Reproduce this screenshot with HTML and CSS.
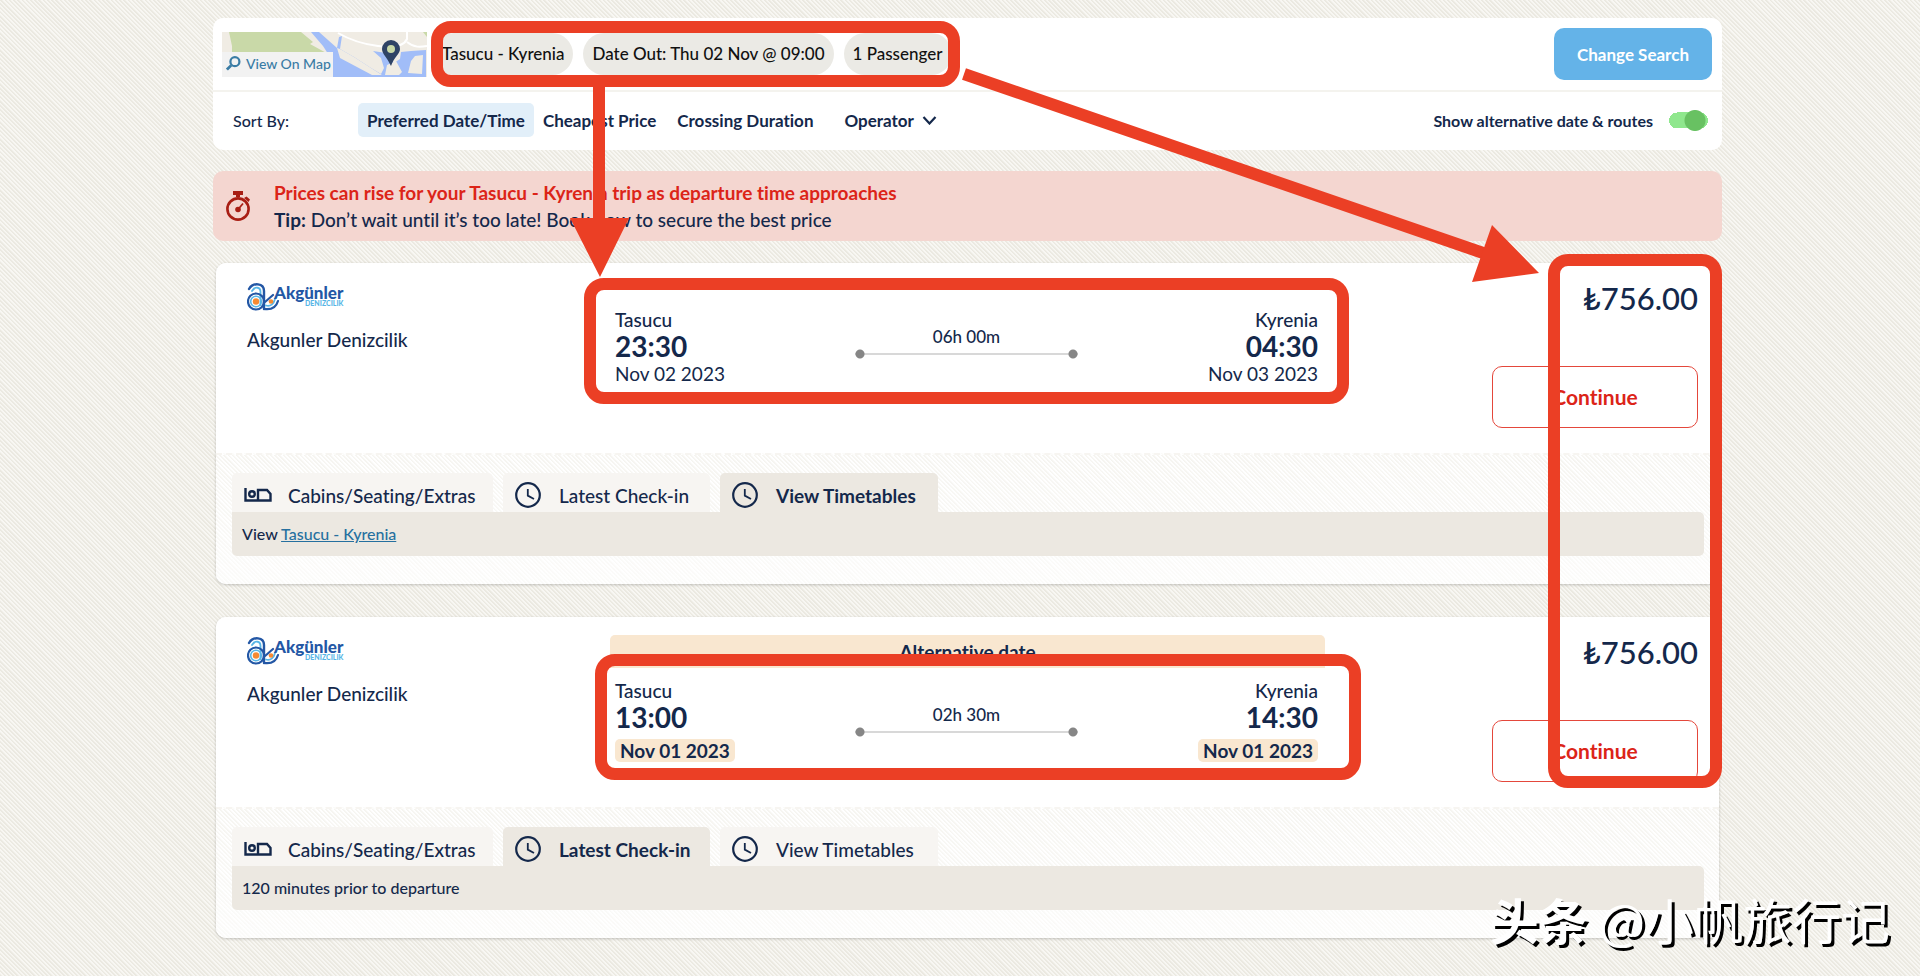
FILE: index.html
```html
<!DOCTYPE html>
<html lang="en">
<head>
    <meta charset="UTF-8">
    <meta name="viewport" content="width=device-width, initial-scale=1.0">
    <title>Tasucu - Kyrenia Ferries</title>
    <link rel="stylesheet" href="styles.css">
</head>
<body>
    <!-- Shared icons -->
    <svg class="sprite" aria-hidden="true">
        <symbol id="icon-bed" viewBox="0 0 28 14">
            <path d="M1.500 0V12.500H26.500V6L23 2H14V12" fill="none" stroke="currentColor" stroke-width="2.400"/>
            <circle cx="8" cy="6" r="2.800" fill="none" stroke="currentColor" stroke-width="2.400"/>
        </symbol>
        <symbol id="icon-clock" viewBox="0 0 26 26">
            <circle cx="13" cy="13" r="11.800" fill="none" stroke="currentColor" stroke-width="2.200"/>
            <path d="M12.800 7V13.600L19 17" fill="none" stroke="currentColor" stroke-width="1.800"/>
        </symbol>
        <symbol id="logo-akgunler" viewBox="0 0 98 28">
            <g fill="none" stroke-linecap="round">
                <path d="M2 6C6 -1 17 0 17 8V26" stroke="#2357a5" stroke-width="2.400"/>
                <path d="M5 8C8 3 13.500 4 13.500 9V22" stroke="#58b6e6" stroke-width="1.800"/>
                <circle cx="9" cy="18.500" r="8" stroke="#2357a5" stroke-width="2.200"/>
                <circle cx="9" cy="18.500" r="5.300" stroke="#58b6e6" stroke-width="1.600"/>
                <path d="M18 19L26 12M17 26C24 27 29 25 31 18" stroke="#2357a5" stroke-width="2.200"/>
                <path d="M19 22.500C24 24 27 20 28 16" stroke="#58b6e6" stroke-width="1.800"/>
            </g>
            <circle cx="9" cy="18.500" r="3.200" fill="#f58a33"/>
            <circle cx="24" cy="18.500" r="2.300" fill="#f58a33"/>
            <text class="logo-name" x="27" y="16">Akgünler</text>
            <text class="logo-sub" x="58" y="23">DENIZCILIK</text>
        </symbol>
    </svg>

    <main class="page">
        <section class="search-panel">
            <div class="search-row">
                <a class="map" href="#map">
                    <svg class="map-art" viewBox="0 0 205 45" preserveAspectRatio="none" aria-hidden="true">
                        <rect width="205" height="45" fill="#f0ece4"/>
                        <path d="M7 0H79L91 10 88 12 108 23 114 30 108 38H10V14Z" fill="#c9d9a8"/>
                        <path d="M89 0H97L115 16 117 5 120 4 118 17 132 25 149 36 159 42 162 36 159 26 151 19 164 21 172 31 178 27 179 20 189 19 204 18V45H110V28L101 14Z" fill="#a1bdf8"/>
                        <path d="M165 33L174 29 180 40 177 43H163ZM189 29L193 24 201 23 200 42 186 41Z" fill="#f0ece4"/>
                        <path d="M118 17L132 25 149 36 160 43 150 43 118 26 115 16Z" fill="#f0ece4"/>
                        <path d="M116 1C128 8 140 12 156 14 172 16 182 14 185 7V0M185 10C192 16 199 15 205 14" fill="none" stroke="#fff" stroke-width="2"/>
                        <path d="M201 0H205V5Z" fill="#c9d9a8"/>
                        <path d="M169 34C165 25 160 22 160 17A9 9 0 0 1 178 17C178 22 172 25 169 34Z" fill="#2f4365"/>
                        <circle cx="169" cy="17" r="4" fill="#c9d9a8"/>
                    </svg>
                    <span class="map-label">
                        <svg class="icon-search" viewBox="0 0 16 16" aria-hidden="true">
                            <circle cx="9.500" cy="6" r="4.800" fill="none" stroke="currentColor" stroke-width="2.400"/>
                            <path d="M5.500 10L1 14.500" stroke="currentColor" stroke-width="3"/>
                        </svg>
                        View On Map
                    </span>
                </a>
                <ul class="pills">
                    <li>Tasucu - Kyrenia</li>
                    <li>Date Out: Thu 02 Nov @ 09:00</li>
                    <li>1 Passenger</li>
                </ul>
                <button class="change-search" type="button">Change Search</button>
            </div>
            <div class="sort-row">
                <span class="sort-label">Sort By:</span>
                <button class="sort-btn active" type="button">Preferred Date/Time</button>
                <button class="sort-btn" type="button">Cheapest Price</button>
                <button class="sort-btn crossing-sort" type="button">Crossing Duration</button>
                <button class="sort-btn operator-sort" type="button">
                    Operator
                    <svg class="chevron" viewBox="0 0 14 9" aria-hidden="true"><path d="M1 1L7 7.500L13 1" fill="none" stroke="currentColor" stroke-width="2.200"/></svg>
                </button>
                <label class="toggle" for="alternatives">
                    Show alternative date &amp; routes
                    <input type="checkbox" id="alternatives" checked>
                </label>
            </div>
        </section>

        <section class="alert">
            <svg class="stopwatch" viewBox="0 0 24 30" aria-hidden="true">
                <path d="M7 0H17V4H14V6H10V4H7ZM18 7L20.500 5.500 24 8.500 22.500 11Z" fill="#a81e14"/>
                <circle cx="12" cy="18" r="10.600" fill="none" stroke="#a81e14" stroke-width="2.600"/>
                <circle cx="12" cy="18.500" r="2.800" fill="#a81e14"/>
                <path d="M12 18.500L17 12.500" stroke="#a81e14" stroke-width="1.800"/>
            </svg>
            <div>
                <p class="alert-title">Prices can rise for your Tasucu - Kyrenia trip as departure time approaches</p>
                <p><strong>Tip:</strong> Don’t wait until it’s too late! Book now to secure the best price</p>
            </div>
        </section>

        <article class="card">
            <div class="card-main">
                <div class="operator">
                    <svg class="logo" viewBox="0 0 98 28" role="img" aria-label="Akgünler Denizcilik"><use href="#logo-akgunler"/></svg>
                    <p>Akgunler Denizcilik</p>
                </div>
                <div class="trip">
                    <div class="itinerary">
                        <div class="stop">
                            <span class="city">Tasucu</span>
                            <span class="time">23:30</span>
                            <span class="date">Nov 02 2023</span>
                        </div>
                        <div class="duration"><span>06h 00m</span></div>
                        <div class="stop arrive">
                            <span class="city">Kyrenia</span>
                            <span class="time">04:30</span>
                            <span class="date">Nov 03 2023</span>
                        </div>
                    </div>
                </div>
                <div class="booking">
                    <span class="price">₺756.00</span>
                    <button class="continue" type="button">Continue</button>
                </div>
            </div>
            <div class="card-footer">
                <div class="tabs">
                    <button class="tab tab-cabins" type="button"><svg class="icon-bed" aria-hidden="true"><use href="#icon-bed"/></svg>Cabins/Seating/Extras</button>
                    <button class="tab tab-checkin" type="button"><svg class="icon-clock" aria-hidden="true"><use href="#icon-clock"/></svg>Latest Check-in</button>
                    <button class="tab tab-times active" type="button"><svg class="icon-clock" aria-hidden="true"><use href="#icon-clock"/></svg>View Timetables</button>
                </div>
                <div class="tab-panel">View <a href="#timetable">Tasucu - Kyrenia</a></div>
            </div>
        </article>

        <article class="card">
            <div class="card-main">
                <div class="operator">
                    <svg class="logo" viewBox="0 0 98 28" role="img" aria-label="Akgünler Denizcilik"><use href="#logo-akgunler"/></svg>
                    <p>Akgunler Denizcilik</p>
                </div>
                <div class="trip alternative">
                    <p class="banner">Alternative date</p>
                    <div class="itinerary">
                        <div class="stop">
                            <span class="city">Tasucu</span>
                            <span class="time">13:00</span>
                            <span class="date">Nov 01 2023</span>
                        </div>
                        <div class="duration"><span>02h 30m</span></div>
                        <div class="stop arrive">
                            <span class="city">Kyrenia</span>
                            <span class="time">14:30</span>
                            <span class="date">Nov 01 2023</span>
                        </div>
                    </div>
                </div>
                <div class="booking">
                    <span class="price">₺756.00</span>
                    <button class="continue" type="button">Continue</button>
                </div>
            </div>
            <div class="card-footer">
                <div class="tabs">
                    <button class="tab tab-cabins" type="button"><svg class="icon-bed" aria-hidden="true"><use href="#icon-bed"/></svg>Cabins/Seating/Extras</button>
                    <button class="tab tab-checkin active" type="button"><svg class="icon-clock" aria-hidden="true"><use href="#icon-clock"/></svg>Latest Check-in</button>
                    <button class="tab tab-times" type="button"><svg class="icon-clock" aria-hidden="true"><use href="#icon-clock"/></svg>View Timetables</button>
                </div>
                <div class="tab-panel">120 minutes prior to departure</div>
            </div>
        </article>
    </main>

    <!-- Hand-drawn frames and arrows over the results -->
    <svg class="marks" viewBox="0 0 1920 976" aria-hidden="true">
        <g fill="none" stroke="#eb3f25" stroke-width="12">
            <rect x="437" y="27" width="517" height="54" rx="14"/>
            <rect x="590" y="284" width="753" height="114" rx="14"/>
            <rect x="601" y="660" width="754" height="114" rx="14"/>
            <rect x="1554" y="260" width="162" height="522" rx="14"/>
            <path d="M599 85V222M964 74L1486 254"/>
        </g>
        <path d="M570 218H629L600 277ZM1492 225L1539 273L1472 282Z" fill="#eb3f25"/>
    </svg>
    <p class="watermark" lang="zh"><b>头条</b> @小帆旅行记</p>
</body>
</html>
```
FILE: styles.css
```css
* {
    box-sizing: border-box;
}
body {
    margin: 0;
    position: relative;
    font-family: Lato, "Liberation Sans", sans-serif;
    font-size: 19px;
    font-weight: 500;
    font-variant-ligatures: none;
    color: #14284b;
    background: #f6f5f0 repeating-linear-gradient(45deg, #ebe9e1 0 1px, #f8f7f3 2px 3px);
}
p, ul {
    margin: 0;
    padding: 0;
}
button {
    font: inherit;
    font-variant-ligatures: none;
    color: inherit;
    border: none;
    background: none;
    padding: 0;
    cursor: pointer;
    white-space: nowrap;
}
.sprite {
    display: none;
}
.page {
    padding: 18px 198px 38px 213px;
}

/* Search panel */
.search-panel {
    background: #fff;
    border-radius: 10px;
}
.search-row {
    display: flex;
    align-items: center;
    height: 74px;
    padding: 0 10px 0 9px;
    border-bottom: 2px solid #f4f3ee;
}
.map {
    display: grid;
    width: 205px;
    height: 45px;
    text-decoration: none;
}
.map-art, .map-label {
    grid-area: 1 / 1;
}
.map-art {
    width: 205px;
    height: 45px;
}
.map-label {
    display: flex;
    align-items: center;
    gap: 5px;
    justify-self: start;
    align-self: end;
    width: 111px;
    height: 25px;
    padding: 0 0 2px 4px;
    background: #f2f2f2;
    color: #3a7ca5;
    font-size: 14px;
    font-weight: 500;
    white-space: nowrap;
}
.icon-search {
    width: 15px;
    height: 15px;
}
.pills {
    display: flex;
    gap: 10px;
    margin-left: 6px;
    list-style: none;
    color: #111;
    font-size: 17px;
}
.pills li {
    padding: 0 9px;
    line-height: 42px;
    border-radius: 21px;
    background: #ebeae5;
}
.change-search {
    margin-left: auto;
    width: 158px;
    height: 52px;
    border-radius: 10px;
    background: #64b3e8;
    color: #fff;
    font-size: 17px;
    font-weight: 700;
}
.sort-row {
    display: flex;
    align-items: center;
    height: 58px;
    padding: 0 14px 2px 20px;
    font-size: 16px;
}
.sort-label {
    width: 125px;
}
.sort-btn {
    height: 34px;
    padding: 0 9px;
    border-radius: 5px;
    font-size: 17px;
    font-weight: 700;
}
.sort-btn.active {
    background: #e2eff9;
}
.crossing-sort {
    margin-left: 3px;
}
.operator-sort {
    display: flex;
    align-items: center;
    gap: 8px;
    margin-left: 13px;
}
.chevron {
    width: 15px;
    height: 9px;
}
.toggle {
    display: flex;
    align-items: center;
    gap: 16px;
    margin-left: auto;
    font-weight: 700;
}
.toggle input {
    appearance: none;
    width: 39px;
    height: 21px;
    margin: 0;
    background:
        radial-gradient(circle at 26px 50%, #68c162 10px, transparent 11px),
        radial-gradient(circle at 8px 50%, #8fe78d 8px, transparent 8px),
        radial-gradient(circle at 31px 50%, #8fe78d 8px, transparent 8px),
        linear-gradient(#8fe78d, #8fe78d) center / 23px 16px no-repeat;
}

/* Price alert */
.alert {
    display: flex;
    align-items: center;
    gap: 24px;
    height: 70px;
    margin: 21px 0 22px;
    padding-left: 13px;
    border-radius: 10px;
    background: #f4d6d0;
    line-height: 27px;
}
.stopwatch {
    width: 24px;
    height: 30px;
}
.alert-title {
    color: #dc2418;
    font-weight: 700;
}

/* Result cards */
.card {
    margin: 0 3px 33px;
    border-radius: 10px;
    background: #fff;
    box-shadow: 0 1px 3px rgba(0, 0, 0, 0.2);
    overflow: hidden;
}
.card:last-child {
    margin-bottom: 0;
}
.card-main {
    display: grid;
    grid-template-columns: 1fr minmax(0, 715px) 1fr;
    height: 190px;
    background: #fff;
}
.operator {
    padding: 20px 0 0 31px;
}
.operator p {
    margin-top: 16px;
    line-height: 26px;
}
.logo {
    display: block;
    width: 98px;
    height: 28px;
}
.logo-name {
    font: 900 17px Lato, sans-serif;
    fill: #2357a5;
}
.logo-sub {
    font: 900 7px Lato, sans-serif;
    fill: #58b6e6;
}
.itinerary {
    display: flex;
    justify-content: space-between;
    padding: 43px 7px 0 5px;
}
.stop {
    display: flex;
    flex-direction: column;
    align-items: flex-start;
    width: 240px;
    line-height: 27px;
}
.arrive {
    align-items: flex-end;
}
.time {
    font-size: 28px;
    font-weight: 700;
}
.date {
    font-weight: 400;
}
.duration {
    flex: 1;
    height: 53px;
    padding-top: 19px;
    text-align: center;
    font-size: 17px;
    line-height: 24px;
    background:
        radial-gradient(circle at 5px 5px, #868686 4px, transparent 5px) left bottom / 10px 10px no-repeat,
        radial-gradient(circle at 5px 5px, #868686 4px, transparent 5px) right bottom / 10px 10px no-repeat,
        linear-gradient(#d8d8d8, #d8d8d8) 0 47px / 100% 2px no-repeat;
}
.banner {
    height: 33px;
    margin-top: 18px;
    border-radius: 5px 5px 0 0;
    background: #f9e7d0;
    text-align: center;
    font-weight: 700;
    line-height: 33px;
}
.alternative .itinerary {
    padding-top: 9px;
}
.alternative .duration {
    margin-top: 7px;
}
.alternative .date {
    margin-top: 8px;
    padding: 0 5px;
    border-radius: 5px;
    background: #f9e7d0;
    font-weight: 700;
    line-height: 23px;
}
.booking {
    display: flex;
    flex-direction: column;
    align-items: flex-end;
    padding: 16px 21px 0 0;
}
.price {
    font-size: 31px;
    line-height: 38px;
}
.continue {
    width: 206px;
    height: 62px;
    margin-top: 49px;
    padding-bottom: 2px;
    border: 1px solid #e4473b;
    border-radius: 10px;
    color: #dc2418;
    font-size: 21px;
    font-weight: 700;
}

/* Card footer tabs */
.card-footer {
    padding: 18px 15px 28px 16px;
    border-top: 2px dashed #f7f5f1;
    background:
        linear-gradient(rgba(255, 255, 255, 0), rgba(255, 255, 255, 0.6)),
        repeating-linear-gradient(45deg, #f6f5f1 0 1px, #fff 2px 3px);
}
.tabs {
    display: flex;
    gap: 10px;
}
.tab {
    display: flex;
    align-items: center;
    height: 39px;
    padding: 5px 0 0 12px;
    border-radius: 5px 5px 0 0;
    background: #f7f5f2;
}
.tab-cabins {
    width: 261px;
    gap: 16px;
}
.tab-checkin {
    width: 207px;
    gap: 18px;
}
.tab-times {
    width: 218px;
    gap: 18px;
}
.tab.active {
    background: #ece8e1;
    font-weight: 700;
}
.icon-bed {
    width: 28px;
    height: 14px;
}
.icon-clock {
    width: 26px;
    height: 26px;
}
.tab-panel {
    height: 44px;
    padding-left: 10px;
    border-radius: 0 5px 5px 5px;
    background: #ece8e1;
    font-size: 16px;
    line-height: 44px;
}
.tab-panel a {
    color: #26709f;
}

/* Overlay */
.marks {
    position: absolute;
    top: 0;
    left: 0;
    width: 1920px;
    height: 976px;
    pointer-events: none;
}
.watermark {
    position: absolute;
    right: 30px;
    bottom: 24px;
    color: #fff;
    font-family: "Noto Sans CJK SC", sans-serif;
    font-size: 49px;
    font-weight: 400;
    line-height: 66px;
    text-shadow: 3px 3px 0 #000;
}
```
